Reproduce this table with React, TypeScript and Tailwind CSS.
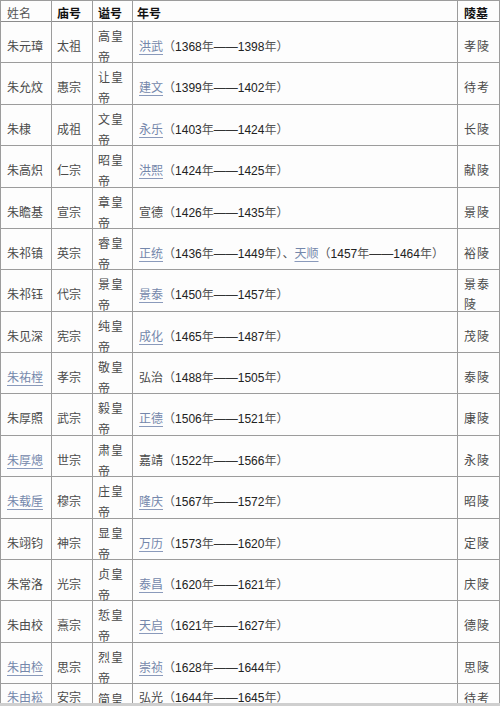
import React, { Fragment } from "react";

type Era = { n: string; link?: boolean; a: string; b: string };
type Row = {
  name: string;
  nameLink?: boolean;
  temple: string;
  shi: string;
  eras: Era[];
  tomb: string;
  h: string;
};

const rows: Row[] = [
  { name: "朱元璋", temple: "太祖", shi: "高皇帝", eras: [{ n: "洪武", link: true, a: "1368", b: "1398" }], tomb: "孝陵", h: "h-[41px]" },
  { name: "朱允炆", temple: "惠宗", shi: "让皇帝", eras: [{ n: "建文", link: true, a: "1399", b: "1402" }], tomb: "待考", h: "h-[42px]" },
  { name: "朱棣", temple: "成祖", shi: "文皇帝", eras: [{ n: "永乐", link: true, a: "1403", b: "1424" }], tomb: "长陵", h: "h-[41px]" },
  { name: "朱高炽", temple: "仁宗", shi: "昭皇帝", eras: [{ n: "洪熙", link: true, a: "1424", b: "1425" }], tomb: "献陵", h: "h-[42px]" },
  { name: "朱瞻基", temple: "宣宗", shi: "章皇帝", eras: [{ n: "宣德", a: "1426", b: "1435" }], tomb: "景陵", h: "h-[41px]" },
  {
    name: "朱祁镇",
    temple: "英宗",
    shi: "睿皇帝",
    eras: [
      { n: "正统", link: true, a: "1436", b: "1449" },
      { n: "天顺", link: true, a: "1457", b: "1464" },
    ],
    tomb: "裕陵",
    h: "h-[41px]",
  },
  { name: "朱祁钰", temple: "代宗", shi: "景皇帝", eras: [{ n: "景泰", link: true, a: "1450", b: "1457" }], tomb: "景泰陵", h: "h-[42px]" },
  { name: "朱见深", temple: "宪宗", shi: "纯皇帝", eras: [{ n: "成化", link: true, a: "1465", b: "1487" }], tomb: "茂陵", h: "h-[41px]" },
  { name: "朱祐樘", nameLink: true, temple: "孝宗", shi: "敬皇帝", eras: [{ n: "弘治", a: "1488", b: "1505" }], tomb: "泰陵", h: "h-[41px]" },
  { name: "朱厚照", temple: "武宗", shi: "毅皇帝", eras: [{ n: "正德", link: true, a: "1506", b: "1521" }], tomb: "康陵", h: "h-[42px]" },
  { name: "朱厚熜", nameLink: true, temple: "世宗", shi: "肃皇帝", eras: [{ n: "嘉靖", a: "1522", b: "1566" }], tomb: "永陵", h: "h-[41px]" },
  { name: "朱载垕", nameLink: true, temple: "穆宗", shi: "庄皇帝", eras: [{ n: "隆庆", link: true, a: "1567", b: "1572" }], tomb: "昭陵", h: "h-[42px]" },
  { name: "朱翊钧", temple: "神宗", shi: "显皇帝", eras: [{ n: "万历", link: true, a: "1573", b: "1620" }], tomb: "定陵", h: "h-[41px]" },
  { name: "朱常洛", temple: "光宗", shi: "贞皇帝", eras: [{ n: "泰昌", link: true, a: "1620", b: "1621" }], tomb: "庆陵", h: "h-[41px]" },
  { name: "朱由校", temple: "熹宗", shi: "悊皇帝", eras: [{ n: "天启", link: true, a: "1621", b: "1627" }], tomb: "德陵", h: "h-[42px]" },
  { name: "朱由检", nameLink: true, temple: "思宗", shi: "烈皇帝", eras: [{ n: "崇祯", link: true, a: "1628", b: "1644" }], tomb: "思陵", h: "h-[41px]" },
];

const last: Row = { name: "朱由崧", nameLink: true, temple: "安宗", shi: "简皇帝", eras: [{ n: "弘光", a: "1644", b: "1645" }], tomb: "待考", h: "" };

const cjk = "font-['Noto_Sans_CJK_SC',sans-serif]";
const num = "font-['Liberation_Sans','Noto_Sans_CJK_SC',sans-serif]";
const linkCls = "text-[#7487ab] underline decoration-[#8a9abb] underline-offset-[3px]";
const bodyText = "text-[#4a4a4a]";
const grid = "grid grid-cols-[51px_41px_40px_325px_42px]";
const cell = "border-r border-[#9c9c9c] flex";

function EraCell({ eras }: { eras: Era[] }) {
  return (
    <span className="whitespace-nowrap">
      {eras.map((e, i) => (
        <Fragment key={i}>
          {i > 0 && <span className={`${cjk} text-[#555]`}>、</span>}
          <span className={`${cjk} ${e.link ? linkCls : bodyText}`}>{e.n}</span>
          <span className={`${cjk} text-[#555]`}>（</span>
          <span className={`${num} text-[#222]`}>{e.a}</span>
          <span className={`${cjk} text-[#555]`}>年</span>
          <span className={`${num} text-[#333]`}>——</span>
          <span className={`${num} text-[#222]`}>{e.b}</span>
          <span className={`${cjk} text-[#555]`}>年</span>
          <span className={`${cjk} text-[#555]`}>）</span>
        </Fragment>
      ))}
    </span>
  );
}

function DataRow({ r, isLast }: { r: Row; isLast?: boolean }) {
  const align = isLast ? "items-start pt-[4px]" : "items-center pt-[3px]";
  return (
    <div className={`${grid} ${isLast ? "h-[24px]" : `${r.h} border-b border-[#9c9c9c]`}`}>
      <div className={`${cell} ${align} pl-[6px]`}>
        <span className={`${cjk} ${r.nameLink ? linkCls : bodyText} whitespace-nowrap`}>{r.name}</span>
      </div>
      <div className={`${cell} ${align} pl-[5px]`}>
        <span className={`${cjk} ${bodyText}`}>{r.temple}</span>
      </div>
      <div className={`${cell} ${align} pl-[5px] pr-[5px]`}>
        <span className={`${cjk} ${bodyText} leading-[21px] tracking-[1px]`}>{r.shi}</span>
      </div>
      <div className={`${cell} ${align} pl-[6px]`}>
        <EraCell eras={r.eras} />
      </div>
      <div className={`${cell} ${align} pl-[6px] pr-[5px]`}>
        <span className={`${cjk} ${bodyText} leading-[20px] tracking-[1px]`}>{r.tomb}</span>
      </div>
    </div>
  );
}

export default function App() {
  return (
    <div className="w-[500px] h-[706px] bg-white overflow-hidden flex flex-col text-[12px] leading-[18px]">
      <div className="h-[703px] overflow-hidden border-l border-t border-[#9c9c9c] bg-[#fdfdfd]">
        <div className={`${grid} h-[21px] border-b border-[#8c8c8c]`}>
          <div className={`${cell} items-center pt-[3px] pl-[6px]`}>
            <span className={`${cjk} text-[#555]`}>姓名</span>
          </div>
          <div className={`${cell} items-center pt-[3px] pl-[5px]`}>
            <span className={`${cjk} font-bold text-[#111]`}>庙号</span>
          </div>
          <div className={`${cell} items-center pt-[3px] pl-[5px]`}>
            <span className={`${cjk} font-bold text-[#111]`}>谥号</span>
          </div>
          <div className={`${cell} items-center pt-[3px] pl-[4px]`}>
            <span className={`${cjk} font-bold text-[#111]`}>年号</span>
          </div>
          <div className={`${cell} items-center pt-[3px] pl-[6px]`}>
            <span className={`${cjk} font-bold text-[#111]`}>陵墓</span>
          </div>
        </div>
        {rows.map((r, i) => (
          <DataRow key={i} r={r} />
        ))}
        <DataRow r={last} isLast />
      </div>
      <div className="h-[3px] bg-[#cfcfcf]" />
    </div>
  );
}
